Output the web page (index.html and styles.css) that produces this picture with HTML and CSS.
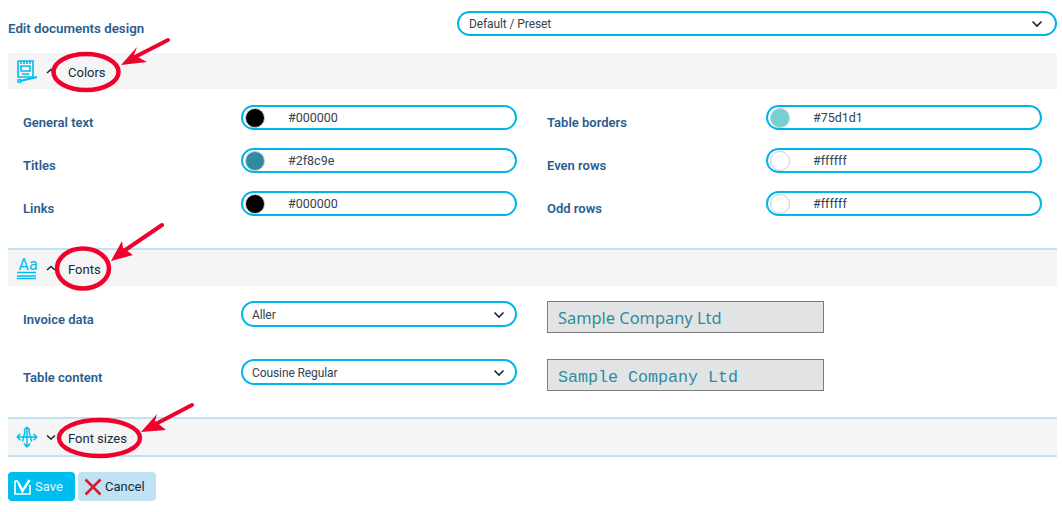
FILE: index.html
```html
<!DOCTYPE html>
<html lang="en">
<head>
<meta charset="utf-8">
<title>Edit documents design</title>
<link rel="stylesheet" href="styles.css">
</head>
<body>
<main class="page">
  <div class="top-row">
    <h1 class="page-title">Edit documents design</h1>
    <div class="select select-wide"><span>Default / Preset</span>
      <svg class="chev" viewBox="0 0 12 8"><path d="M1.500 1.500 6 6l4.500-4.500"/></svg></div>
  </div>

  <section class="bar bar-colors">
    <svg class="bar-icon" viewBox="0 0 22 24">
      <path class="i" d="M2 2h15v16H2z"/><path class="i" d="M5 7h9v5H5zM5 2v3M8 2v3M11 2v3M14 2v3M6 15h7"/>
      <path class="i thick" d="M4 22 21 18"/><circle class="i" cx="3.500" cy="22" r="1.500"/>
    </svg>
    <svg class="bar-chev" viewBox="0 0 10 6"><path d="M1 5l4-3.500L9 5"/></svg>
    <span class="bar-title">Colors</span>
  </section>

  <div class="color-grid">
    <label class="field-label">General text</label>
    <div class="color-input"><i class="swatch swatch-black"></i><span>#000000</span></div>
    <label class="field-label">Table borders</label>
    <div class="color-input"><i class="swatch swatch-teal"></i><span>#75d1d1</span></div>
    <label class="field-label">Titles</label>
    <div class="color-input"><i class="swatch swatch-blue"></i><span>#2f8c9e</span></div>
    <label class="field-label">Even rows</label>
    <div class="color-input"><i class="swatch swatch-white"></i><span>#ffffff</span></div>
    <label class="field-label">Links</label>
    <div class="color-input"><i class="swatch swatch-black"></i><span>#000000</span></div>
    <label class="field-label">Odd rows</label>
    <div class="color-input"><i class="swatch swatch-white"></i><span>#ffffff</span></div>
  </div>

  <section class="bar bar-fonts">
    <svg class="bar-icon" viewBox="0 0 22 24">
      <text class="aa" x="2.500" y="14">Aa</text>
      <path class="i" d="M1 16.500h19M1 20h19M1 22.500h19"/>
    </svg>
    <svg class="bar-chev" viewBox="0 0 10 6"><path d="M1 5l4-3.500L9 5"/></svg>
    <span class="bar-title">Fonts</span>
  </section>

  <div class="font-grid">
    <label class="field-label">Invoice data</label>
    <div class="select select-font"><span>Aller</span>
      <svg class="chev" viewBox="0 0 12 8"><path d="M1.500 1.500 6 6l4.500-4.500"/></svg></div>
    <div class="sample sample-aller">Sample Company Ltd</div>
    <label class="field-label">Table content</label>
    <div class="select select-font"><span>Cousine Regular</span>
      <svg class="chev" viewBox="0 0 12 8"><path d="M1.500 1.500 6 6l4.500-4.500"/></svg></div>
    <div class="sample sample-mono">Sample Company Ltd</div>
  </div>

  <section class="bar bar-sizes">
    <svg class="bar-icon" viewBox="0 0 24 24">
      <path class="i" d="M12 1v22M1 12h22M12 1 8.500 5M12 1l3.500 4M12 23l-3.500-4M12 23l3.500-4M1 12l4-3.500M1 12l4 3.500M23 12l-4-3.500M23 12l-4 3.500M10 5 7 17M14 5l3 12"/>
    </svg>
    <svg class="bar-chev" viewBox="0 0 10 6"><path d="M1 1.500 5 5l4-3.500"/></svg>
    <span class="bar-title">Font sizes</span>
  </section>

  <div class="actions">
    <button class="btn btn-save" type="button">
      <svg class="btn-icon" viewBox="0 0 18 16"><path class="save-box" d="M1 2v13h15V6"/><path class="save-box" d="M1 2h3"/><path class="save-check" d="M4 3l4.500 9L15.500 1"/></svg>
      Save</button>
    <button class="btn btn-cancel" type="button">
      <svg class="btn-icon btn-icon-x" viewBox="0 0 18 18"><path d="M1.500 1.500l15 15M16.500 1.500l-15 15"/></svg>
      Cancel</button>
  </div>
</main>

<svg class="annotations" viewBox="0 0 1062 512">
  <ellipse cx="86" cy="72" rx="32.500" ry="18"/>
  <path d="M168 40 129 60"/><polygon points="121,65 137,47 134,55 147,62"/>
  <ellipse cx="83" cy="268.500" rx="26" ry="20"/>
  <path d="M162 225 118 255"/><polygon points="111,261 122,241 123,248 133,255"/>
  <ellipse cx="99.500" cy="438" rx="40.500" ry="18"/>
  <path d="M192 405 148 428"/><polygon points="141,432 157,414 155,421 166,430"/>
</svg>
</body>
</html>
```

FILE: styles.css
```css
* { box-sizing: border-box; }
html, body { margin: 0; padding: 0; }
body {
  position: relative;
  width: 1062px;
  height: 512px;
  overflow: hidden;
  background: #fff;
  font-family: Roboto, "Liberation Sans", sans-serif;
  color: #1c2f3d;
}
.page { padding: 11px 5px 0 8px; display: flex; flex-direction: column; }

.top-row { display: flex; align-items: flex-start; height: 42px; }
.page-title {
  margin: 10px 0 0;
  width: 449px;
  font-size: 13.300px;
  line-height: 16px;
  font-weight: 600;
  color: #2a5d8f;
}
.select {
  display: flex;
  align-items: center;
  justify-content: space-between;
  border: 2px solid #00b5e8;
  border-radius: 13px;
  background: #fff;
  font-size: 12px;
  color: #33434f;
}
.select span { letter-spacing: -.1px; }
.select-wide { width: 600px; height: 25px; padding: 0 12px 0 10px; }
.select-font { width: 276px; height: 26px; padding: 1px 10px 0 9px; }
.chev { width: 12px; height: 8px; }
.chev path, .bar-chev path { fill: none; stroke: #14293a; stroke-width: 1.600; }

.bar {
  display: flex;
  align-items: center;
  background: #f5f5f5;
  padding-left: 8px;
}
.bar-colors { height: 36px; }
.bar-fonts { height: 38px; border-top: 2px solid #bfe3f3; margin-top: 32px; }
.bar-sizes { height: 40px; border-top: 2px solid #bfe3f3; border-bottom: 2px solid #bfe3f3; margin-top: 26px; }
.bar-icon { width: 22px; height: 24px; flex: none; }
.bar-chev { width: 10px; height: 6px; margin-left: 8px; flex: none; }
.bar-title { margin-left: 12px; padding-top: 2px; font-size: 13px; color: #14293a; }
.i { fill: none; stroke: #00bcee; stroke-width: 1.600; }
.i.thick { stroke-width: 2.200; }
.aa { font-size: 16px; fill: #00bcee; font-family: Roboto, sans-serif; }

.color-grid {
  display: grid;
  grid-template-columns: 218px 276px 249px 276px;
  grid-auto-rows: 25px;
  row-gap: 18px;
  padding: 16px 0 0 15px;
}
.field-label {
  align-self: center;
  padding-top: 9px;
  font-size: 13px;
  font-weight: 600;
  color: #2a5d8f;
}
.color-grid .field-label:nth-child(4n+3) { padding-left: 30px; }
.color-input {
  display: flex;
  align-items: center;
  border: 2px solid #00b5e8;
  border-radius: 13px;
  padding-left: 2px;
  font-size: 12.500px;
  color: #33434f;
}
.color-input span { margin-left: 23px; }
.swatch {
  width: 20px;
  height: 20px;
  border-radius: 50%;
  border: 1px solid #ccc;
  flex: none;
}
.swatch-black { background: #000; }
.swatch-teal { background: #75d1d1; }
.swatch-blue { background: #2f8c9e; }
.swatch-white { background: #fff; }

.font-grid {
  display: grid;
  grid-template-columns: 218px 276px 30px 277px;
  grid-auto-rows: 32px;
  row-gap: 26px;
  padding: 15px 0 0 15px;
}
.font-grid .field-label { align-self: start; padding-top: 11px; }
.font-grid .sample { grid-column: 4; }
.sample {
  height: 32px;
  border: 1px solid #7d7d7d;
  background: #e2e3e5;
  padding-left: 10px;
  color: #2f8c9e;
  white-space: nowrap;
}
.sample-aller { font-family: "Noto Sans", sans-serif; font-size: 16.400px; line-height: 32px; }
.sample-mono { font-family: "Liberation Mono", monospace; font-size: 16.670px; line-height: 35px; }

.actions { display: flex; gap: 3px; margin-top: 15px; }
.btn {
  display: flex;
  align-items: center;
  height: 29px;
  border: 0;
  border-radius: 4px;
  padding: 0 0 0 6px;
  font: 400 13px Roboto, sans-serif;
}
.btn-save { width: 67px; background: #00bdf0; color: #e6f8fd; gap: 3px; }
.btn-cancel { width: 78px; background: #bfe3f3; color: #14293a; gap: 3px; }
.btn-icon { width: 18px; height: 16px; flex: none; }
.btn-icon-x { height: 18px; }
.btn-icon-x path { fill: none; stroke: #dc1c2e; stroke-width: 2.600; }
.save-box { fill: none; stroke: #fff; stroke-width: 1.700; }
.save-check { fill: none; stroke: #fff; stroke-width: 2.400; }

.annotations {
  position: absolute;
  left: 0;
  top: 0;
  width: 1062px;
  height: 512px;
  pointer-events: none;
}
.annotations ellipse { fill: none; stroke: #f0002d; stroke-width: 4.500; }
.annotations path { fill: none; stroke: #f0002d; stroke-width: 4; stroke-linecap: round; }
.annotations polygon { fill: #f0002d; }
```
